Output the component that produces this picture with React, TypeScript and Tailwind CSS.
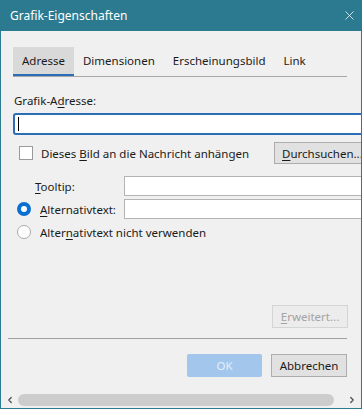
import { X, ChevronLeft, ChevronRight } from "lucide-react";

const tabs = ["Adresse", "Dimensionen", "Erscheinungsbild", "Link"];

function Radio({ checked }: { checked?: boolean }) {
  return checked ? (
    <span className="shrink-0 w-[14px] h-[14px] rounded-full bg-[#0a6fd0] flex items-center justify-center">
      <span className="w-[6px] h-[6px] rounded-full bg-white" />
    </span>
  ) : (
    <span className="shrink-0 block w-[14px] h-[14px] rounded-full bg-white border border-[#a9a9a9]" />
  );
}

export default function App() {
  return (
    <div className="w-[362px] h-[409px] overflow-hidden bg-[#f0f0f0] border-x border-b border-[#2b7a90] flex flex-col font-['Noto_Sans',sans-serif] text-[11.5px] text-[#1a1a1a]">
      {/* title bar */}
      <div className="h-[31px] shrink-0 bg-[#2b7a90] text-white flex items-center justify-between pl-[9px] pr-[4px]">
        <span className="text-[12px]">Grafik-Eigenschaften</span>
        <X className="w-[15px] h-[15px]" strokeWidth={1.2} />
      </div>

      <div className="flex flex-col pl-[12px] pt-[16px]">
        {/* tabs */}
        <div className="w-[334px] flex border-b border-[#a8a8a8]">
          {tabs.map((t, i) => (
            <div
              key={t}
              className={
                i === 0
                  ? "h-[29px] px-[9px] flex items-center bg-[#d9d9d9] border-b-2 border-[#2c6db5]"
                  : "h-[29px] px-[9px] flex items-center border-b-2 border-transparent"
              }
            >
              {t}
            </div>
          ))}
        </div>

        <div className="mt-[15px] pl-[1px]">
          Grafik-A<u className="underline-offset-2">d</u>resse:
        </div>
        <div className="mt-[4px] w-[360px] h-[22px] bg-white border-2 border-[#2c6db5] rounded-[3px] flex items-center pl-[3px]">
          <span className="w-px h-[14px] bg-black" />
        </div>

        <div className="mt-[7px] flex items-center h-[22px]">
          <span className="shrink-0 ml-[6px] w-[14px] h-[14px] bg-white border border-[#9a9a9a]" />
          <span className="shrink-0 ml-[8px] w-[233px]">
            Dieses <u className="underline-offset-2">B</u>ild an die Nachricht anhängen
          </span>
          <div className="shrink-0 w-[100px] h-[22px] bg-[#e1e1e1] border border-[#adadad] flex items-center pl-[7px] whitespace-nowrap">
            <u className="underline-offset-2">D</u>urchsuchen...
          </div>
        </div>

        <div className="mt-[12px] flex items-center h-[20px]">
          <span className="shrink-0 ml-[22px] w-[89px]">
            <u className="underline-offset-2">T</u>ooltip:
          </span>
          <div className="shrink-0 w-[250px] h-[20px] bg-white border border-[#b4b4b4]" />
        </div>

        <div className="mt-[3px] flex items-center h-[20px]">
          <span className="ml-[4px]">
            <Radio checked />
          </span>
          <span className="shrink-0 ml-[9px] w-[84px]">
            <u className="underline-offset-2">A</u>lternativtext:
          </span>
          <div className="shrink-0 w-[250px] h-[20px] bg-white border border-[#b4b4b4]" />
        </div>

        <div className="mt-[3px] flex items-center h-[20px]">
          <span className="ml-[4px]">
            <Radio />
          </span>
          <span className="ml-[9px]">
            Alter<u className="underline-offset-2">n</u>ativtext nicht verwenden
          </span>
        </div>

        <div className="mt-[63px] w-[335px] flex justify-end">
          <div className="w-[76px] h-[23px] bg-[#ececec] border border-[#d5d5d5] text-[#a3a3a3] flex items-center justify-center">
            <u className="underline-offset-2">E</u>rweitert...
          </div>
        </div>
      </div>

      <div className="mt-[10px] ml-[7px] w-[339px] border-t border-[#a0a0a0]" />

      <div className="mt-[15px] w-[346px] flex justify-end gap-[9px]">
        <div className="w-[75px] h-[23px] bg-[#a2c6ec] text-[#e3eefa] rounded-[2px] flex items-center justify-center">
          OK
        </div>
        <div className="w-[76px] h-[23px] bg-[#e1e1e1] border border-[#adadad] flex items-center justify-center">
          Abbrechen
        </div>
      </div>

      {/* horizontal scrollbar */}
      <div className="mt-auto mb-[1px] h-[14px] flex items-center pl-[4px] pr-[4px]">
        <ChevronLeft className="w-[10px] h-[10px] text-[#505050]" strokeWidth={3} />
        <div className="ml-[3px] w-[316px] h-[12px] rounded-full bg-[#cdcdcd]" />
        <div className="flex-1" />
        <ChevronRight className="w-[10px] h-[10px] text-[#505050]" strokeWidth={3} />
      </div>
    </div>
  );
}
